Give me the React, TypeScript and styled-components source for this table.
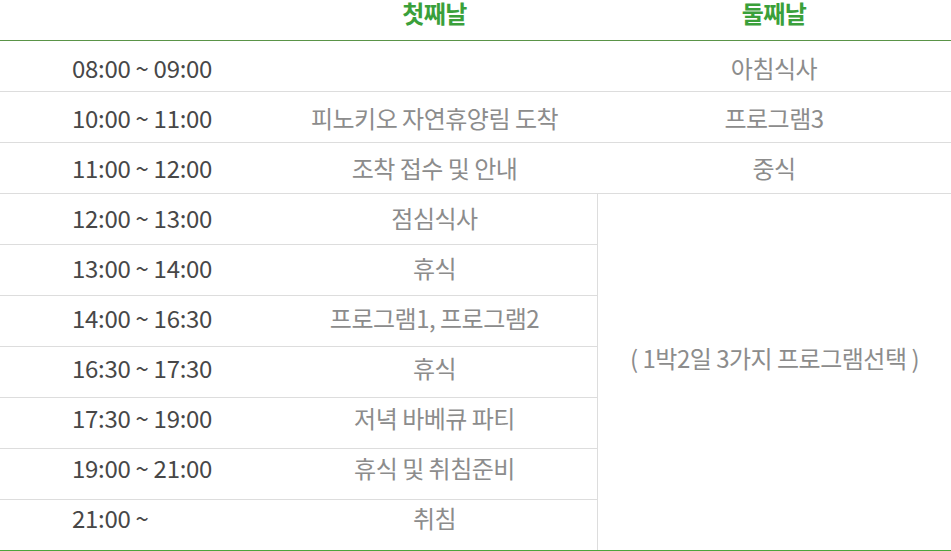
import React from 'react';
import styled, { createGlobalStyle } from 'styled-components';

type Row = {
  time: string;
  day1: string;
  day2?: string;
};

const rows: Row[] = [
  { time: '08:00 ~ 09:00', day1: '', day2: '아침식사' },
  { time: '10:00 ~ 11:00', day1: '피노키오 자연휴양림 도착', day2: '프로그램3' },
  { time: '11:00 ~ 12:00', day1: '조착 접수 및 안내', day2: '중식' },
  { time: '12:00 ~ 13:00', day1: '점심식사' },
  { time: '13:00 ~ 14:00', day1: '휴식' },
  { time: '14:00 ~ 16:30', day1: '프로그램1, 프로그램2' },
  { time: '16:30 ~ 17:30', day1: '휴식' },
  { time: '17:30 ~ 19:00', day1: '저녁 바베큐 파티' },
  { time: '19:00 ~ 21:00', day1: '휴식 및 취침준비' },
  { time: '21:00 ~', day1: '취침' },
];

const GlobalStyle = createGlobalStyle`
  html, body {
    margin: 0;
    padding: 0;
    background: #fff;
  }
  body {
    font-family: 'Noto Sans CJK KR', 'Noto Sans', sans-serif;
  }
`;

const Table = styled.div`
  display: grid;
  grid-template-columns: 283px 314px 1fr;
  width: 951px;
  border-bottom: 1px solid #4ca43c;
`;

const HeadCell = styled.div<{ $shift?: number }>`
  height: 40px;
  border-bottom: 1px solid #5a9448;
  display: flex;
  justify-content: center;
  align-items: flex-start;
  font-size: 24px;
  font-weight: 700;
  line-height: 25px;
  color: #3aa03a;
  letter-spacing: -0.5px;
  padding-right: ${(p) => p.$shift || 0}px;
`;

// $lift raises the text a little per row, as the rows in the shot drift upward
const Cell = styled.div<{ $last?: boolean; $shift?: number; $lift?: number }>`
  box-sizing: border-box;
  height: ${(p) => (p.$last ? 50 : 51)}px;
  border-bottom: ${(p) => (p.$last ? 'none' : '1px solid #dddddd')};
  display: flex;
  align-items: center;
  justify-content: center;
  font-size: 24px;
  letter-spacing: -0.5px;
  padding-right: ${(p) => p.$shift || 0}px;
  padding-top: 2px;
  padding-bottom: ${(p) => (p.$lift || 0) * 2}px;
`;

const TimeCell = styled(Cell)`
  justify-content: flex-start;
  padding-left: 72px;
  color: #474747;
  letter-spacing: -0.3px;
`;

const PlanCell = styled(Cell)`
  color: #8c8c8c;
`;

const MergedCell = styled.div<{ $span: number }>`
  grid-column: 3;
  grid-row: span ${(p) => p.$span};
  border-left: 1px solid #dddddd;
  display: flex;
  align-items: center;
  justify-content: center;
  font-size: 24px;
  letter-spacing: -0.5px;
  color: #8c8c8c;
  padding-bottom: 30px;
`;

const App: React.FC = () => {
  const merged = rows.filter((r) => r.day2 === undefined).length;
  return (
    <>
      <GlobalStyle />
      <Table>
        <HeadCell />
        <HeadCell $shift={11}>첫째날</HeadCell>
        <HeadCell>둘째날</HeadCell>
        {rows.map((r, i) => {
          const last = i === rows.length - 1;
          return (
            <React.Fragment key={r.time}>
              <TimeCell $last={last} $lift={i}>{r.time}</TimeCell>
              <PlanCell $last={last} $lift={i} $shift={11}>{r.day1}</PlanCell>
              {r.day2 !== undefined && (
                <PlanCell $last={last} $lift={i}>{r.day2}</PlanCell>
              )}
              {i === 3 && (
                <MergedCell $span={merged}>( 1박2일 3가지 프로그램선택 )</MergedCell>
              )}
            </React.Fragment>
          );
        })}
      </Table>
    </>
  );
};

export default App;
